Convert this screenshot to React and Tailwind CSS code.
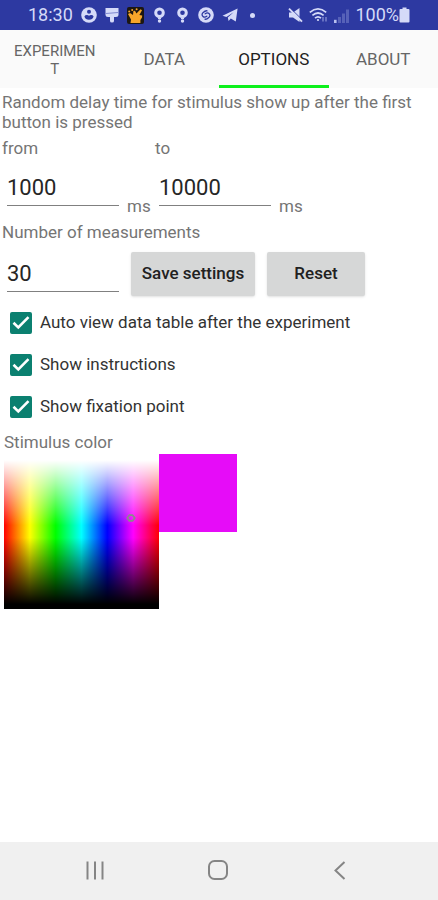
import { useState } from 'react'

// ── Data ────────────────────────────────────────────────────────────────────

const TABS = ['EXPERIMENT', 'DATA', 'OPTIONS', 'ABOUT']

const DEFAULTS = {
  from: '1000',
  to: '10000',
  count: '30',
  autoView: true,
  instructions: true,
  fixation: true,
}

const CHECKS = [
  { name: 'autoView',     label: 'Auto view data table after the experiment' },
  { name: 'instructions', label: 'Show instructions' },
  { name: 'fixation',     label: 'Show fixation point' },
]

// ── Main component ──────────────────────────────────────────────────────────

export default function App() {
  const [tab, setTab] = useState('OPTIONS')
  const [form, setForm] = useState(DEFAULTS)

  const handleChange = (e) => {
    const { name, type, value, checked } = e.target
    setForm(prev => ({ ...prev, [name]: type === 'checkbox' ? checked : value }))
  }

  return (
    <div className="flex min-h-screen flex-col bg-white font-['Roboto',sans-serif] text-[17px] text-[#757575]">
      <StatusBar />

      {/* Tabs */}
      <nav className="grid h-[58px] grid-cols-4 bg-[#fafafa]">
        {TABS.map(name => (
          <button
            key={name}
            type="button"
            onClick={() => setTab(name)}
            className={`flex items-center justify-center border-b-3 pt-1 ${
              tab === name ? 'border-[#0df01c] text-[#212121]' : 'border-transparent text-[#666666]'
            }`}
          >
            <span className={name.length > 8 ? 'w-[84px] text-[15px] leading-[18px] break-all' : ''}>
              {name}
            </span>
          </button>
        ))}
      </nav>

      {/* Options */}
      <main className="flex-1">
        <p className="px-0.5 pt-1 leading-5">
          Random delay time for stimulus show up after the first button is pressed
        </p>

        <div className="flex px-0.5 pt-1.5">
          <div className="w-[153px]">
            <label htmlFor="from" className="block leading-5">from</label>
            <div className="flex items-end pt-3 pl-[5px]">
              <NumberField name="from" value={form.from} onChange={handleChange} />
              <span className="pl-2 leading-5 -mb-2.5">ms</span>
            </div>
          </div>
          <div>
            <label htmlFor="to" className="block leading-5">to</label>
            <div className="flex items-end pt-3 pl-1">
              <NumberField name="to" value={form.to} onChange={handleChange} />
              <span className="pl-2 leading-5 -mb-2.5">ms</span>
            </div>
          </div>
        </div>

        <label htmlFor="count" className="block px-0.5 pt-4 leading-5">Number of measurements</label>

        <div className="flex items-center gap-3 pt-2.5 pl-[7px]">
          <NumberField name="count" value={form.count} onChange={handleChange} />
          <button
            type="button"
            className="h-11 w-[124px] rounded-xs bg-[#d6d7d7] font-medium text-[#212121] shadow-sm"
          >
            Save settings
          </button>
          <button
            type="button"
            onClick={() => setForm(DEFAULTS)}
            className="h-11 w-[98px] rounded-xs bg-[#d6d7d7] font-medium text-[#212121] shadow-sm"
          >
            Reset
          </button>
        </div>

        <div className="pt-1.5">
          {CHECKS.map(c => (
            <label key={c.name} className="flex h-[42px] items-center gap-2 pl-2.5 text-[#333333]">
              <span className="grid">
                <input
                  type="checkbox"
                  name={c.name}
                  checked={form[c.name]}
                  onChange={handleChange}
                  className="peer col-start-1 row-start-1 size-[22px] appearance-none rounded-xs border-2 border-[#0b8070] checked:bg-[#0b8070]"
                />
                <svg
                  viewBox="0 0 22 22"
                  className="pointer-events-none invisible col-start-1 row-start-1 size-[22px] peer-checked:visible"
                >
                  <path d="M3.5 10.8 L8.3 15.4 L18.5 5.2" fill="none" stroke="#ffffff" strokeWidth="2.6" />
                </svg>
              </span>
              {c.label}
            </label>
          ))}
        </div>

        <h2 className="px-1 pt-1 leading-5">Stimulus color</h2>
        <div className="flex items-start pt-0.5 pl-1">
          <ColorField />
          <div className="size-[78px] bg-[#e60cf8]" />
        </div>
      </main>

      <SystemNav />
    </div>
  )
}

// ── Text box with an underline ──────────────────────────────────────────────

function NumberField({ name, value, onChange }) {
  return (
    <input
      id={name}
      name={name}
      type="text"
      inputMode="numeric"
      value={value}
      onChange={onChange}
      className="h-9 w-28 border-b border-[#808080] bg-transparent text-[22px] text-[#262626] outline-none focus:border-[#0b8070]"
    />
  )
}

// ── Hue / shade field ───────────────────────────────────────────────────────

function ColorField() {
  return (
    <div className="relative size-[155px] bg-[linear-gradient(to_right,#ff0000,#ffff00,#00ff00,#00ffff,#0000ff,#ff00ff,#ff0000)]">
      <div className="size-full bg-[linear-gradient(to_bottom,#ffffff_4%,#ffffff00_46%,#00000000_54%,#000000_97%)]" />
      <svg viewBox="0 0 10 8" className="absolute top-[60px] left-[122px] h-2 w-2.5">
        <path d="M1.2 4 L3.4 1.2 H6.6 L8.8 4 L6.6 6.8 H3.4 Z" fill="none" stroke="#8a8a8a" strokeWidth="1.7" />
      </svg>
    </div>
  )
}

// ── Status bar ──────────────────────────────────────────────────────────────

function StatusBar() {
  return (
    <header className="flex h-[30px] items-center justify-between bg-[#2d39a1] px-7 text-lg text-[#d5daf8]">
      <div className="flex items-center gap-2">
        <span>18:30</span>
        {/* account */}
        <svg viewBox="0 0 16 16" className="size-4">
          <circle cx="8" cy="8" r="7.8" fill="#d5daf8" />
          <circle cx="8" cy="4.8" r="2" fill="#2d39a1" />
          <path d="M3.4 9.4 Q4.4 7.6 6.4 8 Q8 9.2 9.6 8 Q11.6 7.6 12.6 9.4 Q11.6 12.6 8 12.8 Q4.4 12.6 3.4 9.4Z" fill="#2d39a1" />
        </svg>
        {/* brush */}
        <svg viewBox="0 0 14 16" className="h-4 w-3.5">
          <path d="M0.5 1 H13.5 V8 Q13.5 10 11 10 H9 V14 Q9 15.5 7 15.5 Q5 15.5 5 14 V10 H3 Q0.5 10 0.5 8Z" fill="#d5daf8" />
          <path d="M1 6.5 L13 5.5" stroke="#7f88cf" strokeWidth="1.2" />
        </svg>
        {/* orange hand */}
        <svg viewBox="0 0 17 17" className="size-[17px]">
          <rect width="17" height="17" rx="2" fill="#1c1712" />
          <path d="M3.5 16 L4 12.5 L1 7 L3 6 L6 8 L6.4 4 L8 3.8 L9.4 6.4 L13.6 2.2 L15 3.2 L12.4 8 L15.2 8.4 L15 10.4 L13.4 13 V16Z" fill="#f6a52a" />
          <circle cx="9.6" cy="2.2" r="1" fill="#f6a52a" />
          <circle cx="5.2" cy="3" r="1" fill="#f6a52a" />
          <circle cx="2.2" cy="4.6" r="1" fill="#f6a52a" />
        </svg>
        <PinIcon />
        <PinIcon />
        {/* shazam */}
        <svg viewBox="0 0 16 16" className="size-4">
          <circle cx="8" cy="8" r="7.8" fill="#d5daf8" />
          <path d="M9 3.8 Q7.4 3.4 5.2 5.4 Q3 7.6 5 9.4 Q6.6 10.8 8.8 9.2 M7 12.2 Q8.6 12.6 10.8 10.6 Q13 8.4 11 6.6 Q9.4 5.2 7.2 6.8" fill="none" stroke="#2d39a1" strokeWidth="1.3" strokeLinecap="round" />
        </svg>
        {/* telegram */}
        <svg viewBox="0 0 16 16" className="size-4">
          <path d="M0.5 8.8 L15.6 1.4 L13.8 14.6 L8.8 11.4 L6.6 14 L5.8 10.4 L11.6 5.2 L4.4 10Z" fill="#d5daf8" />
        </svg>
        <span className="mx-1 size-[5px] rounded-full bg-[#d5daf8]" />
      </div>

      <div className="flex items-center gap-1.5">
        {/* muted speaker */}
        <svg viewBox="0 0 16 16" className="size-4">
          <path d="M2 5.5 H6 L12.5 1 V15 L6 10.5 H2Z" fill="#d5daf8" />
          <path d="M3.4 1.2 L16 13.6" stroke="#2d39a1" strokeWidth="1" />
          <path d="M2 1.6 L15 14.6" stroke="#d5daf8" strokeWidth="2" />
        </svg>
        {/* wifi */}
        <svg viewBox="0 0 19 16" className="h-4 w-[19px]" fill="none" stroke="#d5daf8" strokeWidth="1.7">
          <path d="M0.8 5.4 Q9 -1.6 17.2 5.4" />
          <path d="M3.4 8.4 Q9 3.6 14.6 8.4" />
          <path d="M6 11.2 Q9 8.6 12 11.2" />
          <circle cx="9" cy="13" r="1.1" fill="#d5daf8" stroke="none" />
          <path d="M14 10 V14.5 M17 10 V14.5" stroke="#7f88cf" strokeWidth="1.4" />
        </svg>
        {/* signal */}
        <svg viewBox="0 0 15 15" className="size-[15px]">
          <path d="M0 15 V11.8 H2.6 V15Z" fill="#b9c0ee" />
          <path d="M4 15 V9 H7 V15Z M8 15 V5.4 H11 V15Z M12 15 V1.4 H15 V15Z" fill="#5661b8" />
        </svg>
        <div className="flex items-center">
          <span>100%</span>
          <svg viewBox="0 0 11 16" className="h-4 w-[11px]">
            <path d="M3.5 0.5 H7.5 V2 H9.5 Q10.5 2 10.5 3 V14.5 Q10.5 15.5 9.5 15.5 H1.5 Q0.5 15.5 0.5 14.5 V3 Q0.5 2 1.5 2 H3.5Z" fill="#d5daf8" />
          </svg>
        </div>
      </div>
    </header>
  )
}

function PinIcon() {
  return (
    <svg viewBox="0 0 15 16" className="h-4 w-[15px]">
      <circle cx="7.5" cy="5.8" r="3.8" fill="none" stroke="#d5daf8" strokeWidth="3" />
      <path d="M6 10.5 H9 V12 H6Z" fill="#d5daf8" />
      <circle cx="7.5" cy="14" r="1.7" fill="#d5daf8" />
    </svg>
  )
}

// ── System navigation ───────────────────────────────────────────────────────

function SystemNav() {
  return (
    <footer className="flex h-[58px] items-center justify-between bg-[#f0f0f0] pr-[85px] pl-[82px]">
      <button type="button" aria-label="Recent apps">
        <svg viewBox="0 0 26 22" className="h-[22px] w-[26px]">
          <path d="M5.5 1.5 V19.5 M13 1.5 V19.5 M20.5 1.5 V19.5" stroke="#858585" strokeWidth="2" />
        </svg>
      </button>
      <button type="button" aria-label="Home">
        <svg viewBox="0 0 22 22" className="size-[22px]">
          <rect x="2" y="1" width="18" height="18" rx="5.5" fill="none" stroke="#858585" strokeWidth="2" />
        </svg>
      </button>
      <button type="button" aria-label="Back">
        <svg viewBox="0 0 26 22" className="h-[22px] w-[26px]">
          <path d="M17.5 2 L8.5 10.5 L17.5 19" fill="none" stroke="#858585" strokeWidth="2" />
        </svg>
      </button>
    </footer>
  )
}
